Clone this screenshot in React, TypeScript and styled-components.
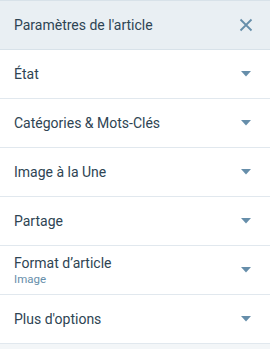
import styled, { createGlobalStyle } from "styled-components";

type section = [string, string?];

const sections: section[] = [
  ["État"],
  ["Catégories & Mots-Clés"],
  ["Image à la Une"],
  ["Partage"],
  ["Format d’article", "Image"],
  ["Plus d'options"],
];

const GlobalStyle = createGlobalStyle`
  html, body {
    margin: 0;
    padding: 0;
    background: #f3f6f8;
  }
  body {
    font-family: Roboto, "Noto Sans", "Liberation Sans", sans-serif;
    -webkit-font-smoothing: antialiased;
  }
`;

const CloseIcon = () => (
  <svg width="14" height="14" viewBox="0 0 14 14">
    <path
      d="M1.5 1.5 L12.5 12.5 M12.5 1.5 L1.5 12.5"
      stroke="#668eaa"
      strokeWidth="1.8"
      fill="none"
    />
  </svg>
);

const Caret = () => (
  <svg width="10" height="6" viewBox="0 0 10 6">
    <path d="M0 0 L10 0 L5 5.5 Z" fill="#668eaa" />
  </svg>
);

const makeSections = (items: section[]) =>
  items.map(([title, subtitle]) => (
    <Row key={title}>
      <RowText>
        <RowTitle>{title}</RowTitle>
        {subtitle && <RowSubtitle>{subtitle}</RowSubtitle>}
      </RowText>
      <Caret />
    </Row>
  ));

const App = () => (
  <>
    <GlobalStyle />
    <Sidebar>
      <Header>
        <HeaderTitle>Paramètres de l'article</HeaderTitle>
        <CloseButton aria-label="Fermer">
          <CloseIcon />
        </CloseButton>
      </Header>
      <Sections>{makeSections(sections)}</Sections>
    </Sidebar>
  </>
);

const Sidebar = styled.div`
  width: 270px;
  height: 349px;
  display: flex;
  flex-direction: column;
  background: #f3f6f8;
  overflow: hidden;
`;

const Header = styled.div`
  height: 48px;
  flex-shrink: 0;
  display: flex;
  align-items: center;
  justify-content: space-between;
  padding: 0 14px 0 14px;
  background: #e9eff3;
  border-top: 1px solid #d8e2e9;
  border-bottom: 1px solid #d8e2e9;
`;

const HeaderTitle = styled.span`
  font-size: 14px;
  color: #2e4453;
`;

const CloseButton = styled.button`
  border: 0;
  background: none;
  padding: 0;
  margin-right: 3px;
  display: flex;
  cursor: pointer;
`;

const Sections = styled.div`
  display: flex;
  flex-direction: column;
  background: #fff;
`;

const Row = styled.div`
  height: 48px;
  display: flex;
  align-items: center;
  justify-content: space-between;
  padding: 0 19px 0 14px;
  border-bottom: 1px solid #e1e8ee;
`;

const RowText = styled.div`
  display: flex;
  flex-direction: column;
`;

const RowTitle = styled.span`
  font-size: 14px;
  color: #2e4453;
  line-height: 18px;
`;

const RowSubtitle = styled.span`
  font-size: 11.5px;
  color: #668eaa;
  line-height: 14px;
`;

export default App;
